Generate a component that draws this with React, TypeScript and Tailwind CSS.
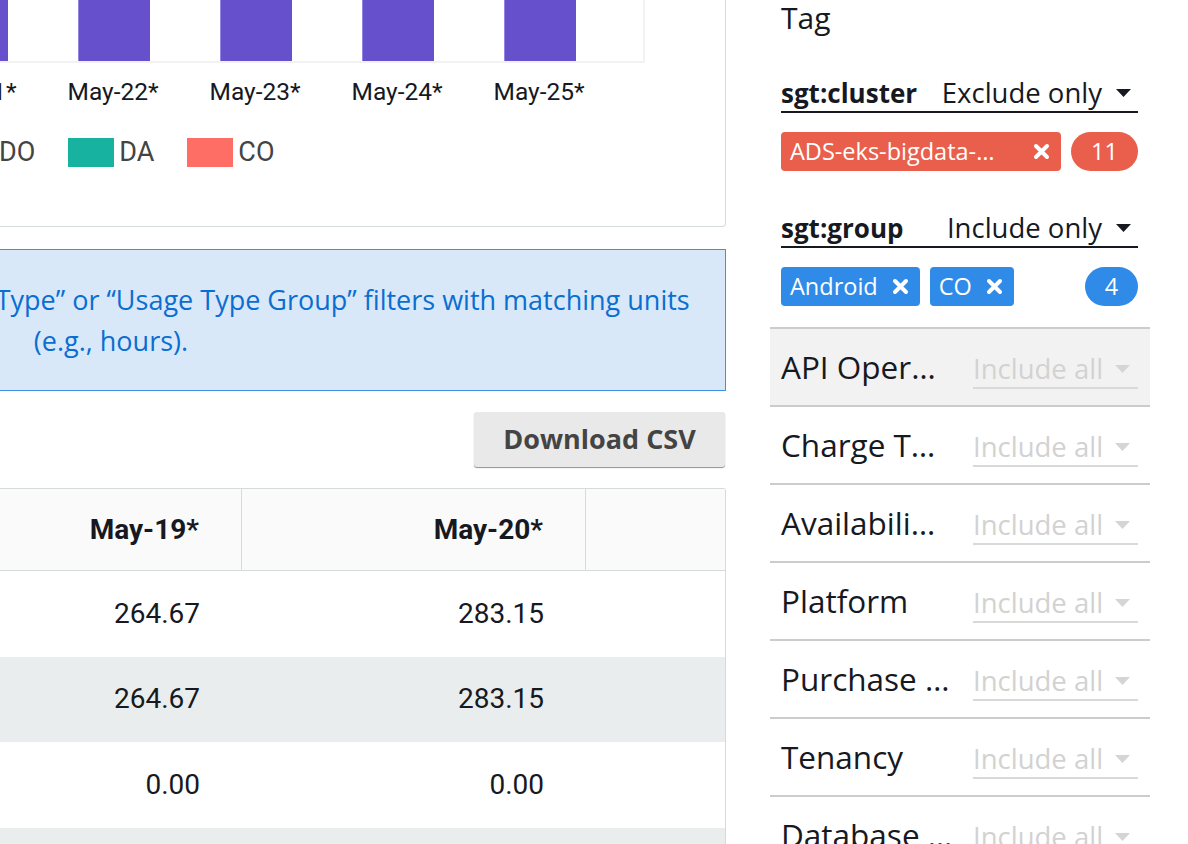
import { Fragment } from "react";

const bars = [0, 1, 2, 3, 4];
const days = ["May-21*", "May-22*", "May-23*", "May-24*", "May-25*"];

const filters = [
  "API Oper…",
  "Charge T…",
  "Availabili…",
  "Platform",
  "Purchase …",
  "Tenancy",
  "Database …",
];

const rows = [
  ["264.67", "283.15"],
  ["264.67", "283.15"],
  ["0.00", "0.00"],
  ["", ""],
];

function Caret({ color }: { color: string }) {
  return (
    <svg width="15" height="8" viewBox="0 0 15 8" className="shrink-0">
      <path d="M0 0 H15 L7.5 8 Z" fill={color} />
    </svg>
  );
}

function Cross() {
  return (
    <svg width="17" height="17" viewBox="0 0 17 17" className="shrink-0">
      <path
        d="M3 3 L14 14 M14 3 L3 14"
        stroke="white"
        strokeWidth="4"
        strokeLinecap="round"
      />
    </svg>
  );
}

export default function App() {
  return (
    <div className="flex w-[1188px] h-[844px] overflow-hidden bg-white">
      {/* LEFT: chart, notice, table */}
      <div className="w-[726px] shrink-0 flex flex-col font-['Roboto',sans-serif] text-[#16191f]">
        <div className="h-[227px] shrink-0 border-r border-b border-[#d5dbdb] rounded-br-[4px] overflow-hidden">
          <div className="h-[63px] w-[645px] border-r-2 border-b-2 border-[#f2f2f2] overflow-hidden">
            <div className="flex h-full ml-[-64px] gap-[70px]">
              {bars.map((b) => (
                <div
                  key={b}
                  className="w-[72px] h-full shrink-0 bg-[#6650cc] border-l border-[#9386e3]"
                />
              ))}
            </div>
          </div>
          <div className="flex ml-[-65px] gap-[70px] mt-[14px]">
            {days.map((d) => (
              <div
                key={d}
                className="w-[72px] shrink-0 flex justify-center whitespace-nowrap text-[24.5px] leading-[30px]"
              >
                {d}
              </div>
            ))}
          </div>
          <div className="flex gap-[33px] ml-[-52px] mt-[31px] text-[27px] leading-[29px] text-[#444]">
            {[
              ["DO", "bg-[#3184c2]"],
              ["DA", "bg-[#18b2a1]"],
              ["CO", "bg-[#fe6e65]"],
            ].map(([n, c]) => (
              <div key={n} className="flex items-center gap-[5px]">
                <div className={`w-[46px] h-[29px] ${c}`} />
                <span>{n}</span>
              </div>
            ))}
          </div>
        </div>

        <div className="mt-[22px] ml-[-504px] w-[1230px] h-[142px] shrink-0 border border-[#3d8fe8] bg-[#d8e8f9] text-[#0a6ed1] flex flex-col items-center justify-center text-center text-[27px] leading-[41px] font-['Open_Sans',sans-serif]">
          <span className="whitespace-nowrap">
            View usage, use one or more “Usage Type” or “Usage Type Group” filters with matching units
          </span>
          <span className="whitespace-nowrap">(e.g., hours).</span>
        </div>

        <button className="mt-[21px] self-end mr-[1px] w-[251px] h-[55px] shrink-0 rounded-[3px] bg-[#e9e9e9] shadow-[0_1px_1px_#879596] text-[27px] font-bold text-[#444] font-['Open_Sans',sans-serif]">
          Download CSV
        </button>

        <div className="mt-[21px] shrink-0 border-t border-r border-[#d5dbdb] rounded-tr-[3px]">
          <div className="grid grid-cols-[242px_344px_1fr] h-[82px] bg-[#fafafa] border-b border-[#d5dbdb] text-[28px] font-bold">
            <div className="flex items-center justify-end pr-[42px] border-r border-[#d5dbdb]">May-19*</div>
            <div className="flex items-center justify-end pr-[42px] border-r border-[#d5dbdb]">May-20*</div>
            <div />
          </div>
          {rows.map((r, i) => (
            <div
              key={i}
              className={`grid grid-cols-[242px_344px_1fr] h-[85.5px] text-[28px] ${
                i % 2 === 1 ? "bg-[#eaeded]" : "bg-white"
              }`}
            >
              <div className="flex items-center justify-end pr-[42px]">{r[0]}</div>
              <div className="flex items-center justify-end pr-[42px]">{r[1]}</div>
              <div />
            </div>
          ))}
        </div>
      </div>

      {/* RIGHT: filters */}
      <div className="ml-[44px] w-[380px] shrink-0 flex flex-col font-['Open_Sans',sans-serif] text-[#16191f]">
        <div className="px-[11px] pr-[12px] flex flex-col">
          <div className="text-[30px] leading-[36px] h-[36px]">Tag</div>

          {[
            {
              key: "sgt:cluster",
              mode: "Exclude only",
              color: "bg-[#e95f4b]",
              chips: [{ label: "ADS-eks-bigdata-…", w: "w-[280px] justify-between" }],
              count: "11",
              countW: "w-[67px]",
            },
            {
              key: "sgt:group",
              mode: "Include only",
              color: "bg-[#2f8be7]",
              chips: [
                { label: "Android", w: "gap-[14px]" },
                { label: "CO", w: "gap-[14px]" },
              ],
              count: "4",
              countW: "w-[53px]",
            },
          ].map((f) => (
            <Fragment key={f.key}>
              <div className="mt-[39px] h-[38px] flex items-center justify-between border-b-2 border-[#16191f]">
                <span className="text-[26px] font-bold leading-none">{f.key}</span>
                <span className="flex items-center gap-[14px] pr-[7px] text-[27.5px] leading-none">
                  {f.mode}
                  <Caret color="#16191f" />
                </span>
              </div>
              <div className="mt-[19px] h-[39px] flex items-center gap-[10px] text-white text-[23.5px]">
                {f.chips.map((c) => (
                  <div
                    key={c.label}
                    className={`h-[39px] flex items-center pl-[9px] pr-[11px] rounded-[4px] ${f.color} ${c.w}`}
                  >
                    <span className="whitespace-nowrap">{c.label}</span>
                    <Cross />
                  </div>
                ))}
                <div
                  className={`ml-auto h-[39px] ${f.countW} rounded-full flex items-center justify-center ${f.color}`}
                >
                  {f.count}
                </div>
              </div>
            </Fragment>
          ))}
        </div>

        <div className="mt-[21px] border-t-2 border-[#cccccc]">
          {filters.map((name, i) => (
            <div
              key={name}
              className={`h-[78px] flex items-center pl-[11px] pr-[12px] border-b-2 border-[#cccccc] ${
                i === 0 ? "bg-[#f2f2f2]" : ""
              }`}
            >
              <span className="w-[192px] text-[31.5px] whitespace-nowrap">{name}</span>
              <span className="mt-[5px] w-[165px] flex items-center justify-between pr-[8px] border-b-2 border-[#d9d9d9] text-[27.5px] leading-[36px] text-[#d2d2d2]">
                Include all
                <Caret color="#d5d5d5" />
              </span>
            </div>
          ))}
        </div>
      </div>
    </div>
  );
}
